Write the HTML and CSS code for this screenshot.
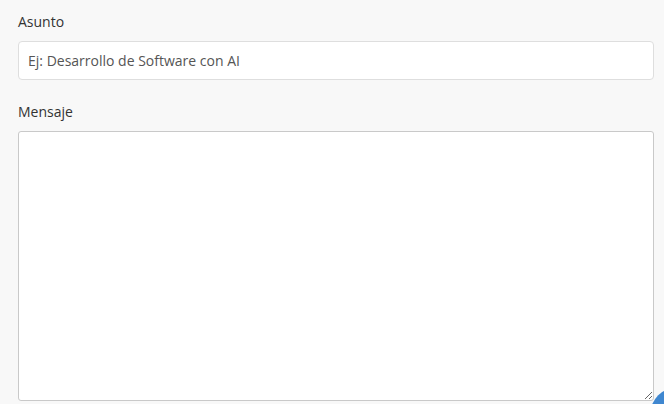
FILE: index.html
```html
<!DOCTYPE html>
<html lang="es">
<head>
<meta charset="utf-8">
<link rel="stylesheet" href="styles.css">
</head>
<body>
<form class="form">
  <div class="field">
    <label class="label" for="asunto">Asunto</label>
    <input class="input" id="asunto" type="text" placeholder="Ej: Desarrollo de Software con AI">
  </div>
  <div class="field">
    <label class="label" for="mensaje">Mensaje</label>
    <textarea class="textarea" id="mensaje"></textarea>
  </div>
</form>
<div class="fab"></div>
</body>
</html>
```
FILE: styles.css
```css
html, body {
  margin: 0;
  padding: 0;
  background: #f8f8f8;
  height: 100%;
  overflow: hidden;
}
body {
  font-family: "Open Sans", "Noto Sans", sans-serif;
  font-size: 14px;
  color: #333;
}
.form {
  display: flex;
  flex-direction: column;
  gap: 23px;
  padding: 13px 10px 0 18px;
}
.field {
  display: flex;
  flex-direction: column;
  gap: 10px;
}
.label {
  line-height: 18px;
  color: #333;
}
.input {
  box-sizing: border-box;
  height: 39px;
  padding: 0 9px;
  border: 1px solid #dedede;
  border-radius: 4px;
  background: #fff;
  font: inherit;
  color: #555;
  outline: none;
}
.input::placeholder {
  color: #555;
  opacity: 1;
}
.textarea {
  box-sizing: border-box;
  height: 270px;
  border: 1px solid #c9c9c9;
  border-radius: 3px;
  background: #fff;
  font: inherit;
  resize: vertical;
  outline: none;
}
.fab {
  position: fixed;
  left: 650px;
  top: 387px;
  width: 56px;
  height: 56px;
  border-radius: 50%;
  background: #3f87d0;
}
```
